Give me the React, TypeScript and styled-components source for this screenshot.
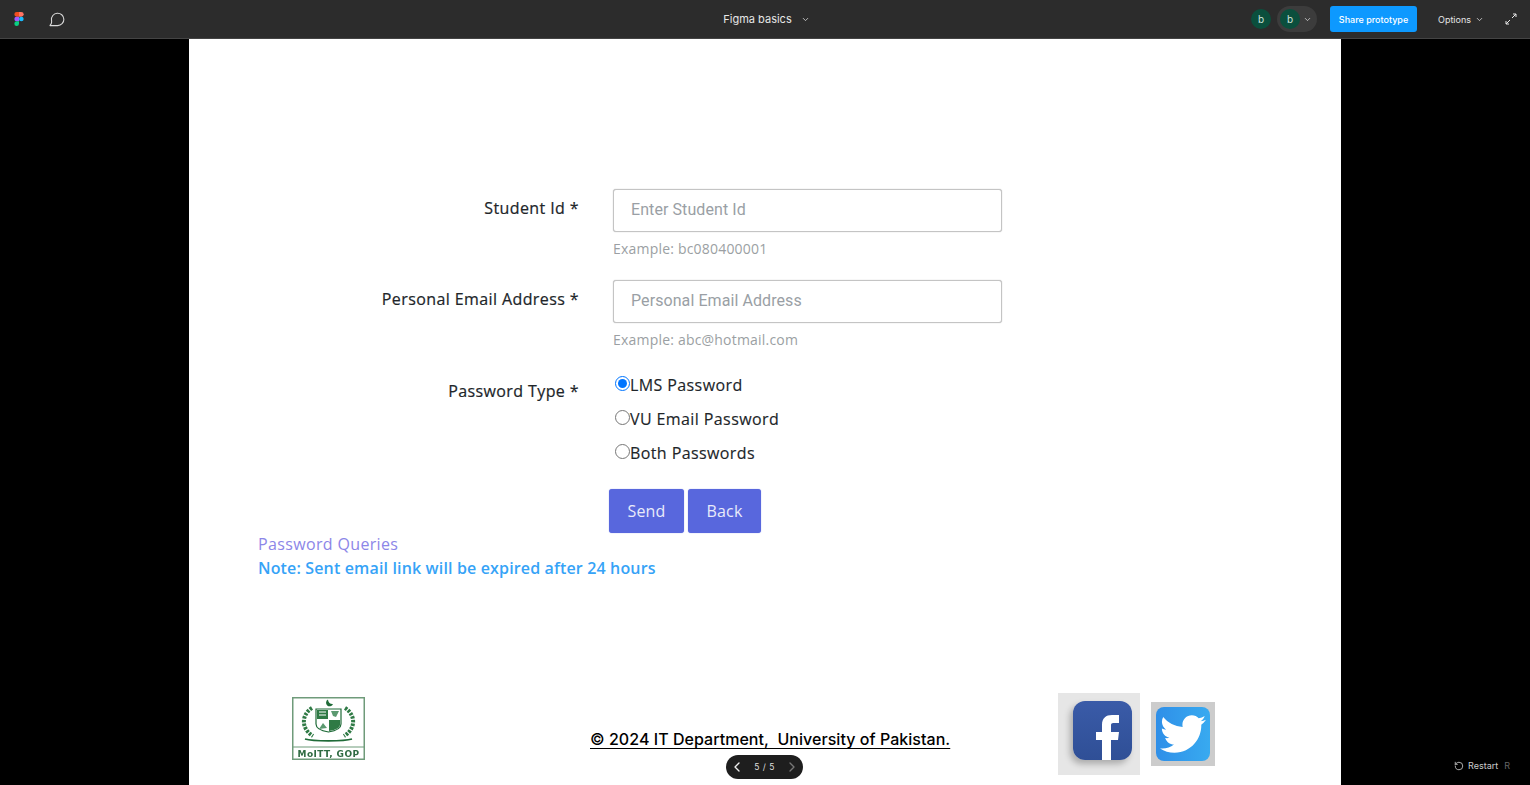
import React from "react";
import styled, { createGlobalStyle } from "styled-components";
import { FaTwitter } from "react-icons/fa";
import { ChevronDown, ChevronLeft, ChevronRight, RotateCcw } from "lucide-react";

const Global = createGlobalStyle`
  html, body { margin: 0; padding: 0; height: 100%; background: #000; overflow: hidden; }
  #root { height: 100%; }
`;
const poppins = `"Open Sans", "Liberation Sans", sans-serif`;
const inter = `Inter, "Liberation Sans", sans-serif`;

const Page = styled.div`
  position: relative; width: 1530px; height: 785px; display: flex; flex-direction: column;
  background: #000; overflow: hidden; font-family: ${inter};
`;
const TopBar = styled.header`
  height: 38px; flex: none; display: grid; grid-template-columns: 1fr auto 1fr; align-items: center;
  background: #2c2c2c; border-bottom: 1px solid #444; color: #fff; font-size: 11px;
`;
const LeftTools = styled.div`display: flex; align-items: center; padding-left: 13px; gap: 24px;`;
const Title = styled.div`display: flex; align-items: center; gap: 9px; font-size: 11px; color: #e6e6e6; padding-left: 3px;`;
const RightTools = styled.div`display: flex; align-items: center; justify-content: flex-end;`;
const Avatar = styled.span`
  width: 20px; height: 20px; border-radius: 50%; background: #0b4f3d; color: #cfe3dc; font-size: 10px;
  display: flex; align-items: center; justify-content: center;
`;
const AvatarPill = styled.div`
  width: 40px; height: 26px; border-radius: 13px; background: #3c3c3c; display: flex; align-items: center;
  padding-left: 3px; gap: 3px; margin-left: 6px; box-sizing: border-box; color: #ddd;
`;
const Share = styled.button`
  margin-left: 13px; width: 87px; height: 26px; border: 0; border-radius: 3px; background: #0d99ff; color: #fff;
  font: 500 9px ${inter}; padding: 0;
`;
const Options = styled.div`display: flex; align-items: center; gap: 4px; margin-left: 21px; font-size: 9px; color: #e6e6e6;`;
const Expand = styled.span`display: flex; margin-left: 21px; margin-right: 13px;`;

const Stage = styled.main`flex: 1; display: flex; justify-content: center; min-height: 0;`;
const Frame = styled.section`
  width: 1152px; height: 100%; background: #fff; box-sizing: border-box; padding-top: 150px;
  display: flex; flex-direction: column; overflow: hidden; font-family: ${poppins};
`;
const Form = styled.form`
  display: grid; grid-template-columns: 390px 389px; column-gap: 34px; grid-auto-rows: min-content;
`;
const Label = styled.label`
  text-align: right; font-size: 16px; line-height: 24px; color: #212529; padding-top: 7px;
  letter-spacing: .4px; font-weight: 500; -webkit-text-stroke: .2px #212529;
`;
const Field = styled.div<{ $h: number }>`display: flex; flex-direction: column; height: ${p => p.$h}px;`;
const Input = styled.input`
  box-sizing: border-box; width: 389px; height: 43px; flex: none; padding: 0 17px 2px; border: 1px solid #c4c4c4; border-radius: 3px;
  font: 16px Roboto, sans-serif; letter-spacing: .08px; background: #fff; outline: none; box-shadow: 0 0 1px #aaa;
  &::placeholder { color: #9a9fa5; opacity: 1; }
`;
const Hint = styled.small`font-size: 14px; line-height: 20px; margin-top: 7px; color: #9b9fa3; letter-spacing: .2px;`;
const RadioGroup = styled.div`display: flex; flex-direction: column; gap: 10px; height: 108px; padding-top: 1px; box-sizing: border-box;`;
const RadioRow = styled.label`
  display: flex; align-items: center; height: 24px; font-size: 16px; color: #212529; letter-spacing: .4px; font-weight: 500;
  -webkit-text-stroke: .15px #212529;
`;
const Radio = styled.input`width: 15px; height: 15px; margin: 0 0 3px 2px; flex: none; accent-color: #0075ff;`;
const Buttons = styled.div`display: flex; gap: 4px; margin-left: 420px; margin-top: 9px;`;
const Btn = styled.button<{ $w: number }>`
  width: ${p => p.$w}px; height: 44px; border: 0; border-radius: 3px; background: #5867dd; color: #e9ebfa;
  font: 16px ${poppins}; padding: 0; letter-spacing: .2px; box-shadow: 0 0 1px #7986e6;
`;
const Notes = styled.div`display: flex; flex-direction: column; padding-left: 69px; margin-top: -1px;`;
const QueryLink = styled.a`font-size: 16px; line-height: 24px; color: #8c86e8; letter-spacing: .35px;`;
const NoteText = styled.p`margin: 0; font-size: 16px; line-height: 24px; color: #36a3f7; font-weight: 600; letter-spacing: .15px;`;

const Footer = styled.footer`display: flex; margin-top: auto; align-items: flex-start; height: 92px; position: relative; flex: none;`;
const LogoBox = styled.div`margin: 4px 0 0 103px; width: 73px; height: 63px; flex: none;`;
const EmblemSvg = styled.svg`display: block; filter: blur(.35px);`;
const Copyright = styled.p`
  margin: 36px 0 0 225px; width: 361px; flex: none; font: 500 16px/20px ${inter}; letter-spacing: .04px; color: #000; white-space: nowrap; text-decoration: underline;
  text-underline-offset: 3px; text-decoration-thickness: 1px;
`;
const Fb = styled.div`
  margin-left: 107px; width: 82px; height: 82px; flex: none; background: #e6e6e6; display: flex; align-items: center; justify-content: center;
`;
const FbTile = styled.div`
  width: 59px; height: 59px; border-radius: 12px; overflow: hidden; background: linear-gradient(#3a5ba8, #2f4f96);
  box-shadow: -3px 4px 6px rgba(0,0,0,.25); margin: -7px 0 0 6px; display: flex;
`;
const Tw = styled.div`
  margin: 9px 0 0 11px; width: 64px; height: 64px; flex: none; background: #cccccc; display: flex; align-items: center; justify-content: center;
`;
const TwTile = styled.div`
  width: 54px; height: 54px; border-radius: 8px; background: linear-gradient(90deg, #2f8fe8, #38aaf0); color: #fff;
  display: flex; align-items: center; justify-content: center;
`;
const Pager = styled.div`
  position: absolute; left: 726px; top: 755px; width: 77px; height: 24px; border-radius: 12px; background: #1e1e1e; color: #ddd;
  display: flex; align-items: center; justify-content: space-between; padding: 0 3px; box-sizing: border-box; font-size: 8.5px; letter-spacing: .5px;
`;
const Restart = styled.div`
  position: absolute; left: 1454px; top: 760px; display: flex; align-items: center; gap: 4px; color: #ccc; font-size: 9px;
`;
const Key = styled.span`color: #666; margin-left: 2px;`;

const Figma = () => (
  <svg width="12" height="14" viewBox="0 0 12 15">
    <path d="M1 2.5A2.5 2.5 0 0 1 3.5 0H6v5H3.5A2.5 2.5 0 0 1 1 2.5z" fill="#f24e1e" />
    <path d="M6 0h2.5a2.5 2.5 0 0 1 0 5H6z" fill="#ff7262" />
    <path d="M1 7.5A2.5 2.5 0 0 1 3.5 5H6v5H3.5A2.5 2.5 0 0 1 1 7.5z" fill="#a259ff" />
    <circle cx="8.5" cy="7.5" r="2.5" fill="#1abcfe" />
    <path d="M1 12.5A2.5 2.5 0 0 1 3.5 10H6v2.5a2.5 2.5 0 0 1-5 0z" fill="#0acf83" />
  </svg>
);
const Comment = () => (
  <svg width="16" height="15" viewBox="0 0 16 15" fill="none" stroke="#d8d8d8" strokeWidth="1.1">
    <path d="M1 13.6h7.6a6.2 6.2 0 1 0-6.1-5.4c.2 1.3.3 1.9-.1 3z" strokeLinejoin="round" />
  </svg>
);
const Arrows = () => (
  <svg width="12" height="12" viewBox="0 0 12 12" fill="none" stroke="#e8e8e8" strokeWidth="1">
    <path d="M7 5l4-4M8 1h3v3M5 7l-4 4M1 8v3h3" />
  </svg>
);
const Emblem = () => (
  <EmblemSvg width="73" height="63" viewBox="0 0 73 63">
    <rect x=".75" y=".75" width="71.500" height="61.500" fill="#fff" stroke="#6f9b7a" strokeWidth="1.500" />
    <path d="M1 50h71" stroke="#6f9b7a" strokeWidth="1.200" />
    <path d="M36 2.500a3.600 3.600 0 1 0 5 4.500 4.400 4.400 0 0 1-5-4.500z" fill="#1f6b38" />
    <path d="M24 12h25v15q0 6-12.500 8Q24 33 24 27z" fill="#fff" stroke="#1f6b38" strokeWidth="1.200" />
    <path d="M25 13h11v9H25zM37 23h11v5q0 4-11 6z" fill="#2f7a45" />
    <path d="M39 14h8l-3 6-3-1zM27 32l4-6 4 5z" fill="#5b9970" />
    <path d="M27 15h7M27 18h7" stroke="#fff" />
    <path d="M20 11c-10 6-12 20 1 28M53 11c10 6 12 20-1 28" fill="none" stroke="#2f7a45" strokeWidth="4" strokeDasharray="2.500 1.200" />
    <path d="M13 42c8 2.500 39 2.500 47 0" fill="none" stroke="#1f6b38" strokeWidth="1.800" />
    <text x="36.500" y="59.500" textAnchor="middle" fontFamily="'DejaVu Sans', sans-serif" fontWeight="700" fontSize="9" letterSpacing=".4" fill="#2f6b42">MoITT, GOP</text>
  </EmblemSvg>
);

export default function App() {
  return (
    <Page>
      <Global />
      <TopBar>
        <LeftTools>
          <Figma />
          <Comment />
        </LeftTools>
        <Title>Figma basics <ChevronDown size={9} strokeWidth={2} /></Title>
        <RightTools>
          <Avatar>b</Avatar>
          <AvatarPill><Avatar>b</Avatar><ChevronDown size={9} strokeWidth={2} /></AvatarPill>
          <Share>Share prototype</Share>
          <Options>Options <ChevronDown size={9} strokeWidth={2} /></Options>
          <Expand><Arrows /></Expand>
        </RightTools>
      </TopBar>
      <Stage>
        <Frame>
          <Form>
            <Label>Student Id *</Label>
            <Field $h={91}>
              <Input placeholder="Enter Student Id" />
              <Hint>Example: bc080400001</Hint>
            </Field>
            <Label>Personal Email Address *</Label>
            <Field $h={92}>
              <Input placeholder="Personal Email Address" />
              <Hint>Example: abc@hotmail.com</Hint>
            </Field>
            <Label>Password Type *</Label>
            <RadioGroup>
              <RadioRow><Radio type="radio" name="t" defaultChecked />LMS Password</RadioRow>
              <RadioRow><Radio type="radio" name="t" />VU Email Password</RadioRow>
              <RadioRow><Radio type="radio" name="t" />Both Passwords</RadioRow>
            </RadioGroup>
          </Form>
          <Buttons>
            <Btn $w={75} type="button">Send</Btn>
            <Btn $w={73} type="button">Back</Btn>
          </Buttons>
          <Notes>
            <QueryLink>Password Queries</QueryLink>
            <NoteText>Note: Sent email link will be expired after 24 hours</NoteText>
          </Notes>
          <Footer>
            <LogoBox><Emblem /></LogoBox>
            <Copyright>© 2024 IT Department,&nbsp; University of Pakistan.</Copyright>
            <Fb>
              <FbTile>
                <svg width="59" height="59" viewBox="0 0 59 59">
                  <path d="M29 59V39h-6v-8h6v-7c0-7 4-10 10-10h7v8h-5c-3 0-3 1-3 3v6h8l-1 8h-7v20z" fill="#fff" />
                </svg>
              </FbTile>
            </Fb>
            <Tw><TwTile><FaTwitter size={46} /></TwTile></Tw>
          </Footer>
        </Frame>
      </Stage>
      <Pager>
        <ChevronLeft size={16} color="#eee" />
        <span>5 / 5</span>
        <ChevronRight size={16} color="#777" />
      </Pager>
      <Restart>
        <RotateCcw size={10} />
        <span>Restart</span>
        <Key>R</Key>
      </Restart>
    </Page>
  );
}
